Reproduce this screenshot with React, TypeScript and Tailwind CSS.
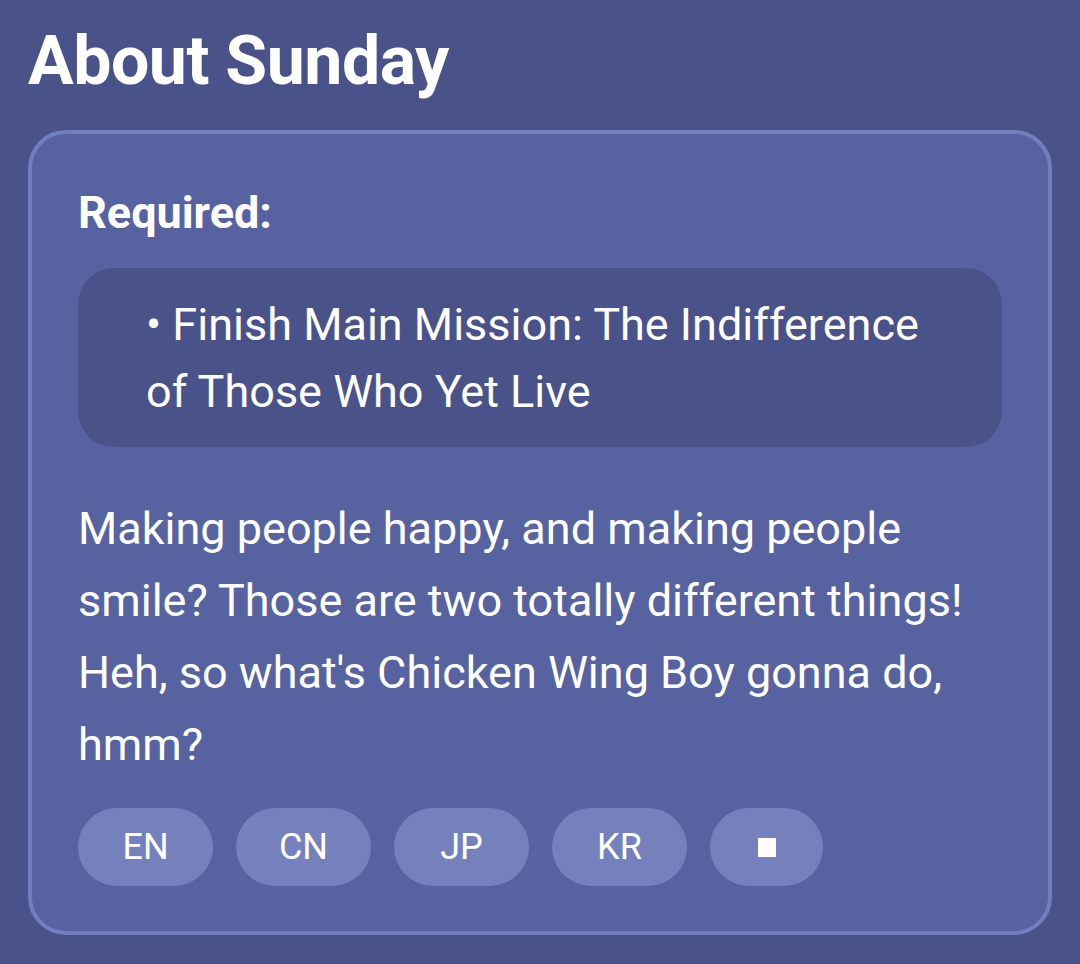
export default function App() {
    const langs = ['EN', 'CN', 'JP', 'KR']

    return (
        <div
            className="min-h-screen bg-[#4a5389] px-[28px] pt-[20px] pb-[28px] text-white"
            style={{ fontFamily: 'Roboto, "Noto Sans", Arial, sans-serif' }}
        >
            {/* Title */}
            <h1 className="text-[68px] font-bold leading-[82px] tracking-[-0.5px]">About Sunday</h1>

            {/* Card */}
            <div className="mt-[28px] rounded-[38px] border-4 border-[#717fbe] bg-[#5763a0] px-[46px] pt-[49px] pb-[45px]">
                <div className="text-[45px] font-bold leading-[60px]">Required:</div>

                {/* Requirement box */}
                <div className="mt-[25px] rounded-[36px] bg-[#4a5389] pl-[68px] pr-[56px] pt-[23px] pb-[22px] text-[45px] leading-[67px]">
                    • Finish Main Mission: The Indifference of Those Who Yet Live
                </div>

                {/* Description */}
                <p className="mt-[46px] text-[45px] leading-[72px]">
                    Making people happy, and making people smile? Those are two totally different
                    things! Heh, so what's Chicken Wing Boy gonna do, hmm?
                </p>

                {/* Voice buttons */}
                <div className="mt-[27px] flex gap-[23px]">
                    {langs.map((l) => (
                        <button
                            key={l}
                            className="flex h-[78px] w-[135px] items-center justify-center rounded-full bg-[#7581bd] text-[36px] text-white"
                        >
                            {l}
                        </button>
                    ))}
                    <button className="flex h-[78px] w-[113px] items-center justify-center rounded-full bg-[#7581bd]">
                        <span className="block h-[19px] w-[18px] bg-white" />
                    </button>
                </div>
            </div>
        </div>
    )
}
